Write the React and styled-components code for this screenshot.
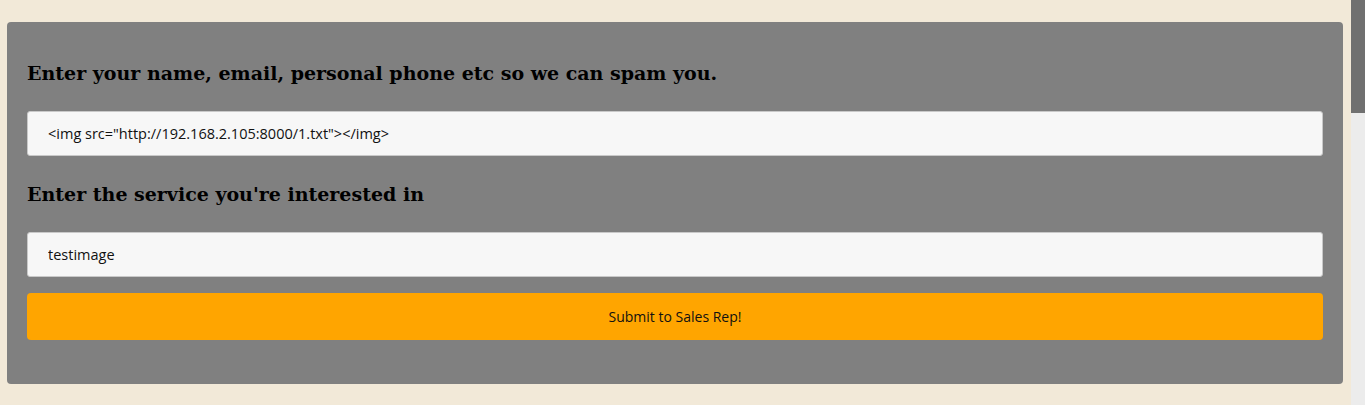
import React from "react";
import styled, { createGlobalStyle } from "styled-components";

const Global = createGlobalStyle`
  html, body { margin: 0; padding: 0; height: 100%; overflow: hidden; }
  body { background: #f2e9d8; }
  #root { height: 100%; }
`;

const Page = styled.div`
  display: flex;
  height: 100vh;
  width: 100%;
`;

const Main = styled.main`
  flex: 1;
  padding: 22px 8px 0 7px;
  background: #f2e9d8;
`;

const ScrollTrack = styled.div`
  width: 14px;
  flex: none;
  background: #ececec;
  display: flex;
  flex-direction: column;
`;

const ScrollThumb = styled.div`
  height: 113px;
  background: #707070;
`;

const Card = styled.form`
  background: #808080;
  border-radius: 4px;
  padding: 40px 20px 44px 20px;
  display: flex;
  flex-direction: column;
`;

const Heading = styled.h3`
  margin: 0;
  font-family: "DejaVu Serif", serif;
  font-weight: bold;
  font-size: 19px;
  line-height: 22px;
  color: #000;
`;

const Field = styled.input`
  box-sizing: border-box;
  height: 45px;
  width: 100%;
  margin: ${(p) => p.$mt}px 0 ${(p) => p.$mb}px 0;
  padding: 0 20px;
  background: #f7f7f7;
  border: 1px solid #c9c9c9;
  border-radius: 3px;
  font-family: "Open Sans", "Noto Sans", sans-serif;
  font-size: 14.5px;
  color: #111;
  outline: none;
`;

const Submit = styled.button`
  height: 47px;
  width: 100%;
  border: none;
  border-radius: 4px;
  background: #ffa500;
  color: #111;
  font-family: "Open Sans", "Noto Sans", sans-serif;
  font-size: 14px;
  cursor: pointer;
`;

export default function App() {
  return (
    <>
      <Global />
      <Page>
        <Main>
          <Card onSubmit={(e) => e.preventDefault()}>
            <Heading>Enter your name, email, personal phone etc so we can spam you.</Heading>
            <Field
              $mt={27}
              $mb={27}
              defaultValue={'<img src="http://192.168.2.105:8000/1.txt"></img>'}
            />
            <Heading>Enter the service you're interested in</Heading>
            <Field $mt={27} $mb={16} defaultValue="testimage" />
            <Submit type="submit">Submit to Sales Rep!</Submit>
          </Card>
        </Main>
        <ScrollTrack>
          <ScrollThumb />
        </ScrollTrack>
      </Page>
    </>
  );
}
